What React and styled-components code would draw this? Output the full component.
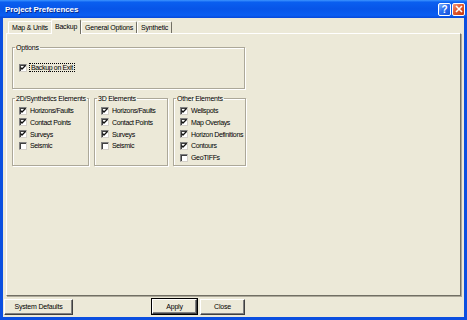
import React from "react";
import styled, { createGlobalStyle } from "styled-components";

const GlobalStyle = createGlobalStyle`
  html, body {
    margin: 0;
    padding: 0;
    background: #ece9d8;
  }
  body {
    font-family: "Liberation Sans", Arial, sans-serif;
  }
`;

const tabs = ["Map & Units", "Backup", "General Options", "Synthetic"];

const groups = [
  {
    title: "2D/Synthetics Elements",
    width: 77,
    items: [
      ["Horizons/Faults", true],
      ["Contact Points", true],
      ["Surveys", true],
      ["Seismic", false],
    ],
  },
  {
    title: "3D Elements",
    width: 74,
    items: [
      ["Horizons/Faults", true],
      ["Contact Points", true],
      ["Surveys", true],
      ["Seismic", false],
    ],
  },
  {
    title: "Other Elements",
    width: 73,
    items: [
      ["Wellspots", true],
      ["Map Overlays", true],
      ["Horizon Definitions", true],
      ["Contours", true],
      ["GeoTIFFs", false],
    ],
  },
];

function CheckBox({ checked }) {
  return (
    <Box>
      {checked && (
        <svg width="6" height="6" viewBox="0 0 6 6">
          <path d="M0.5 2.5 L2 4 L5.5 0.5" stroke="#111" strokeWidth="1.3" fill="none" />
        </svg>
      )}
    </Box>
  );
}

function App() {
  return (
    <Window>
      <GlobalStyle />
      <TitleBar>
        <Title>Project Preferences</Title>
        <Caption>
          <CaptionButton>?</CaptionButton>
          <CaptionButton $close>
            <svg width="8" height="8" viewBox="0 0 8 8">
              <path d="M1 1 L7 7 M7 1 L1 7" stroke="#fff" strokeWidth="1.6" />
            </svg>
          </CaptionButton>
        </Caption>
      </TitleBar>
      <Client>
        <TabStrip>
          {tabs.map((t) => (
            <Tab key={t} $active={t === "Backup"}>
              {t}
            </Tab>
          ))}
        </TabStrip>
        <Panel>
          <Group $width={233} $pad="10px 6px 14px">
            <Legend>Options</Legend>
            <Row>
              <CheckBox checked />
              <FocusText>Backup on Exit</FocusText>
            </Row>
          </Group>
          <GroupRow>
            {groups.map((g) => (
              <Group key={g.title} $width={g.width} $pad="2px 5px 1px 6px">
                <Legend>{g.title}</Legend>
                {g.items.map(([label, on]) => (
                  <Row key={label}>
                    <CheckBox checked={on} />
                    <span>{label}</span>
                  </Row>
                ))}
              </Group>
            ))}
          </GroupRow>
        </Panel>
        <ButtonBar>
          <Button $width={69}>System Defaults</Button>
          <RightButtons>
            <Button $width={45} $default>
              Apply
            </Button>
            <Button $width={45}>Close</Button>
          </RightButtons>
        </ButtonBar>
      </Client>
    </Window>
  );
}

export default App;

const Window = styled.div`
  width: 467px;
  height: 320px;
  display: flex;
  flex-direction: column;
  background: #0b4fe0;
  box-sizing: border-box;
`;

const TitleBar = styled.div`
  height: 18px;
  flex: none;
  display: flex;
  align-items: center;
  justify-content: space-between;
  padding: 0 2px 0 5px;
  background: linear-gradient(
    to bottom,
    #3d95ff 0%,
    #0a5ff0 12%,
    #0755e8 50%,
    #0a5ef2 85%,
    #0748d8 100%
  );
`;

const Title = styled.div`
  color: #fff;
  font-weight: bold;
  font-size: 8px;
  letter-spacing: -0.1px;
  text-shadow: 1px 1px 0 #0a2a8a;
`;

const Caption = styled.div`
  display: flex;
  gap: 1px;
`;

const CaptionButton = styled.div`
  width: 13px;
  height: 13px;
  box-sizing: border-box;
  border: 1px solid #fff;
  border-radius: 2px;
  display: flex;
  align-items: center;
  justify-content: center;
  color: #fff;
  font-weight: bold;
  font-size: 10px;
  background: ${(p) =>
    p.$close
      ? "linear-gradient(135deg, #f09a80 0%, #e2582e 45%, #c43a12 100%)"
      : "linear-gradient(135deg, #7fb0ff 0%, #2b6ff0 45%, #1550d8 100%)"};
`;

const Client = styled.div`
  flex: 1;
  display: flex;
  flex-direction: column;
  margin: 0 3px 3px;
  padding: 3px 2px 0 3px;
  background: #ece9d8;
`;

const TabStrip = styled.div`
  display: flex;
  align-items: flex-end;
  height: 12px;
  padding-left: 2px;
  position: relative;
  z-index: 1;
`;

const Tab = styled.div`
  font-size: 7px;
  letter-spacing: -0.2px;
  color: #000;
  box-sizing: border-box;
  height: ${(p) => (p.$active ? "15px" : "12px")};
  margin-bottom: ${(p) => (p.$active ? "-1px" : "0")};
  padding: ${(p) => (p.$active ? "0 3px 2px" : "0 3px")};
  display: flex;
  align-items: center;
  background: #ece9d8;
  border-top: 1px solid #fff;
  border-left: 1px solid #fff;
  border-right: 1px solid #716f64;
  border-radius: 2px 2px 0 0;
  margin-left: ${(p) => (p.$active ? "-1px" : "0")};
`;

const Panel = styled.div`
  flex: 1;
  display: flex;
  flex-direction: column;
  gap: 5px;
  padding: 9px 4px 0 5px;
  border: 1px solid #fff;
  border-right-color: #716f64;
  border-bottom-color: #716f64;
  box-shadow: 1px 1px 0 #aca899;
  margin-right: 1px;
`;

const GroupRow = styled.div`
  display: flex;
  gap: 5px;
  align-items: stretch;
`;

const Group = styled.fieldset`
  margin: 0;
  width: ${(p) => p.$width}px;
  min-width: 0;
  box-sizing: border-box;
  padding: ${(p) => p.$pad};
  border: 1px solid #aca899;
  box-shadow: 1px 1px 0 #fff, inset 1px 1px 0 #fff;
  display: flex;
  flex-direction: column;
`;

const Legend = styled.legend`
  font-size: 7px;
  letter-spacing: -0.2px;
  line-height: 9px;
  white-space: nowrap;
  padding: 0 1px;
  margin-left: -4px;
  color: #000;
`;

const Row = styled.label`
  display: flex;
  align-items: center;
  gap: 3px;
  height: 11.75px;
  font-size: 7px;
  letter-spacing: -0.35px;
  color: #000;
  white-space: nowrap;
`;

const Box = styled.span`
  width: 8px;
  height: 8px;
  flex: none;
  box-sizing: border-box;
  background: #fff;
  border: 1px solid #808080;
  border-right-color: #d4d0c8;
  border-bottom-color: #d4d0c8;
  box-shadow: inset 1px 1px 0 #404040;
  display: flex;
  align-items: center;
  justify-content: center;
`;

const FocusText = styled.span`
  outline: 1px dotted #000;
  padding: 0 1px;
`;

const ButtonBar = styled.div`
  height: 21px;
  flex: none;
  display: flex;
  align-items: center;
  margin-left: -2px;
`;

const RightButtons = styled.div`
  display: flex;
  gap: 3px;
  margin-left: 79px;
`;

const Button = styled.div`
  width: ${(p) => p.$width}px;
  height: ${(p) => (p.$default ? "15px" : "16px")};
  box-sizing: border-box;
  display: flex;
  align-items: center;
  justify-content: center;
  font-size: 7px;
  letter-spacing: -0.2px;
  color: #000;
  background: #ece9d8;
  border: 1px solid #fff;
  border-right-color: #404040;
  border-bottom-color: #404040;
  box-shadow: ${(p) =>
    p.$default
      ? "0 0 0 1px #000, inset -1px -1px 0 #808080"
      : "inset -1px -1px 0 #808080"};
`;
